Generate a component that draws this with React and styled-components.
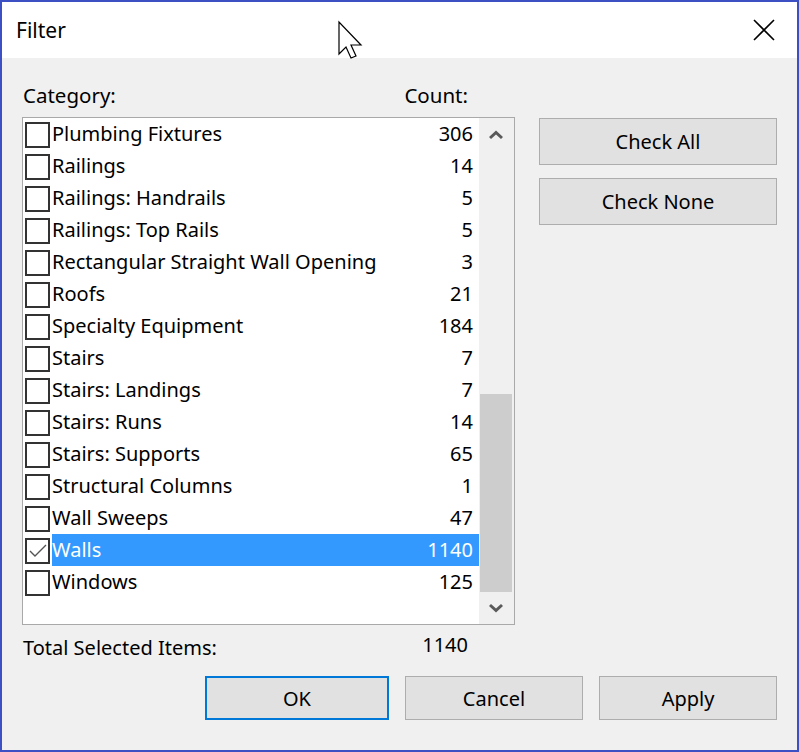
import React from "react";
import styled, { createGlobalStyle } from "styled-components";

const GlobalStyle = createGlobalStyle`
  html, body {
    margin: 0;
    padding: 0;
    background: #ffffff;
  }
  * {
    box-sizing: border-box;
  }
`;

const items = [
  { name: "Plumbing Fixtures", count: 306 },
  { name: "Railings", count: 14 },
  { name: "Railings: Handrails", count: 5 },
  { name: "Railings: Top Rails", count: 5 },
  { name: "Rectangular Straight Wall Opening", count: 3 },
  { name: "Roofs", count: 21 },
  { name: "Specialty Equipment", count: 184 },
  { name: "Stairs", count: 7 },
  { name: "Stairs: Landings", count: 7 },
  { name: "Stairs: Runs", count: 14 },
  { name: "Stairs: Supports", count: 65 },
  { name: "Structural Columns", count: 1 },
  { name: "Wall Sweeps", count: 47 },
  { name: "Walls", count: 1140, checked: true },
  { name: "Windows", count: 125 },
];

const Window = styled.div`
  position: relative;
  width: 799px;
  height: 752px;
  border: 2px solid #3c4fc3;
  background: #f0f0f0;
  font-family: "Segoe UI", "Noto Sans", "Open Sans", sans-serif;
  color: #000;
  display: flex;
  flex-direction: column;
`;

const TitleBar = styled.div`
  height: 56px;
  background: #fff;
  display: flex;
  align-items: center;
  justify-content: space-between;
  padding: 0 22px 0 14px;
  font-size: 21px;
`;

const Body = styled.div`
  flex: 1;
  padding: 24px 20px 0 20px;
  display: grid;
  grid-template-columns: 493px 238px;
  column-gap: 24px;
  align-content: start;
`;

const LeftColumn = styled.div`
  display: flex;
  flex-direction: column;
`;

const HeaderRow = styled.div`
  height: 35px;
  display: flex;
  align-items: flex-start;
  font-size: 20.5px;
  line-height: 26px;
  padding-left: 1px;
`;

const HeaderCount = styled.span`
  margin-left: auto;
  margin-right: 47px;
`;

const ListBox = styled.div`
  height: 508px;
  border: 1px solid #a9a9a9;
  background: #fff;
  display: flex;
`;

const Rows = styled.div`
  flex: 1;
  display: flex;
  flex-direction: column;
`;

const Row = styled.div`
  height: 32px;
  display: flex;
  align-items: center;
  padding-left: 2px;
  font-size: 20px;
`;

const Box = styled.span`
  width: 25px;
  height: 26px;
  border: 2px solid #333;
  background: #fff;
  flex: none;
  display: flex;
  align-items: center;
  justify-content: center;
  margin-top: 1px;
`;

const Label = styled.div`
  flex: 1;
  height: 32px;
  margin-left: 2px;
  display: flex;
  align-items: center;
  padding-right: 6px;
  padding-bottom: 1px;
  background: ${(p) => (p.$selected ? "#3399ff" : "transparent")};
  color: ${(p) => (p.$selected ? "#fff" : "#000")};
`;

const Count = styled.span`
  margin-left: auto;
`;

const ScrollBar = styled.div`
  width: 35px;
  background: #f0f0f0;
  display: flex;
  flex-direction: column;
  align-items: center;
`;

const Arrow = styled.div`
  height: 32px;
  width: 100%;
  display: flex;
  align-items: center;
  justify-content: center;
  padding-right: 2px;
`;

const Track = styled.div`
  flex: 1;
  width: 100%;
  display: flex;
  flex-direction: column;
  padding: 0 2px 0 1px;
`;

const Thumb = styled.div`
  margin-top: auto;
  height: 198px;
  background: #cdcdcd;
`;

const RightColumn = styled.div`
  padding-top: 36px;
  display: flex;
  flex-direction: column;
  gap: 13px;
`;

const Button = styled.button`
  height: ${(p) => p.$height || 44}px;
  width: ${(p) => (p.$width ? `${p.$width}px` : "100%")};
  background: #e1e1e1;
  border: 1px solid ${(p) => (p.$default ? "#0078d7" : "#adadad")};
  box-shadow: ${(p) => (p.$default ? "inset 0 0 0 1px #0078d7" : "none")};
  font-family: inherit;
  font-size: 20px;
  color: #000;
  padding: 0;
`;

const TotalRow = styled.div`
  grid-column: 1 / 2;
  height: 44px;
  display: flex;
  align-items: center;
  font-size: 20px;
  padding-left: 1px;
`;

const TotalValue = styled.span`
  margin-left: auto;
  margin-right: 47px;
  margin-top: -6px;
`;

const Footer = styled.div`
  display: flex;
  justify-content: flex-end;
  gap: 16px;
  padding: 7px 20px 0 0;
`;

const Spacer = styled.div`
  height: 30px;
`;

const Cursor = styled.svg`
  position: absolute;
  left: 335px;
  top: 18px;
`;

function Chevron({ up }) {
  return (
    <svg width="16" height="11" viewBox="0 0 16 11">
      <path
        d={
          up
            ? "M1 8 L8 1.5 L15 8 L13 10 L8 5.5 L3 10 Z"
            : "M1 3 L8 9.5 L15 3 L13 1 L8 5.5 L3 1 Z"
        }
        fill="#5a5a5a"
      />
    </svg>
  );
}

export default function App() {
  return (
    <>
      <GlobalStyle />
      <Window>
        <TitleBar>
          <span>Filter</span>
          <svg width="22" height="22" viewBox="0 0 22 22">
            <path d="M1 1 L21 21 M21 1 L1 21" stroke="#000" strokeWidth="1.6" />
          </svg>
        </TitleBar>
        <Body>
          <LeftColumn>
            <HeaderRow>
              <span>Category:</span>
              <HeaderCount>Count:</HeaderCount>
            </HeaderRow>
            <ListBox>
              <Rows>
                {items.map((item) => (
                  <Row key={item.name}>
                    <Box>
                      {item.checked && (
                        <svg width="20" height="16" viewBox="0 0 20 16">
                          <polyline
                            points="2,8 7,13 18,2"
                            fill="none"
                            stroke="#555"
                            strokeWidth="1.4"
                          />
                        </svg>
                      )}
                    </Box>
                    <Label $selected={item.checked}>
                      {item.name}
                      <Count>{item.count}</Count>
                    </Label>
                  </Row>
                ))}
              </Rows>
              <ScrollBar>
                <Arrow>
                  <Chevron up />
                </Arrow>
                <Track>
                  <Thumb />
                </Track>
                <Arrow>
                  <Chevron />
                </Arrow>
              </ScrollBar>
            </ListBox>
          </LeftColumn>
          <RightColumn>
            <Button $height={47}>Check All</Button>
            <Button $height={47}>Check None</Button>
          </RightColumn>
          <TotalRow>
            Total Selected Items:
            <TotalValue>1140</TotalValue>
          </TotalRow>
        </Body>
        <Footer>
          <Button $width={184} $default>
            OK
          </Button>
          <Button $width={178}>Cancel</Button>
          <Button $width={178}>Apply</Button>
        </Footer>
        <Spacer />
        <Cursor width="28" height="42" viewBox="0 0 28 42">
          <path
            d="M2 2 L2 34 L9 27 L14 38 L19 36 L14 25 L24 25 Z"
            fill="#fff"
            stroke="#000"
            strokeWidth="1.2"
          />
        </Cursor>
      </Window>
    </>
  );
}
